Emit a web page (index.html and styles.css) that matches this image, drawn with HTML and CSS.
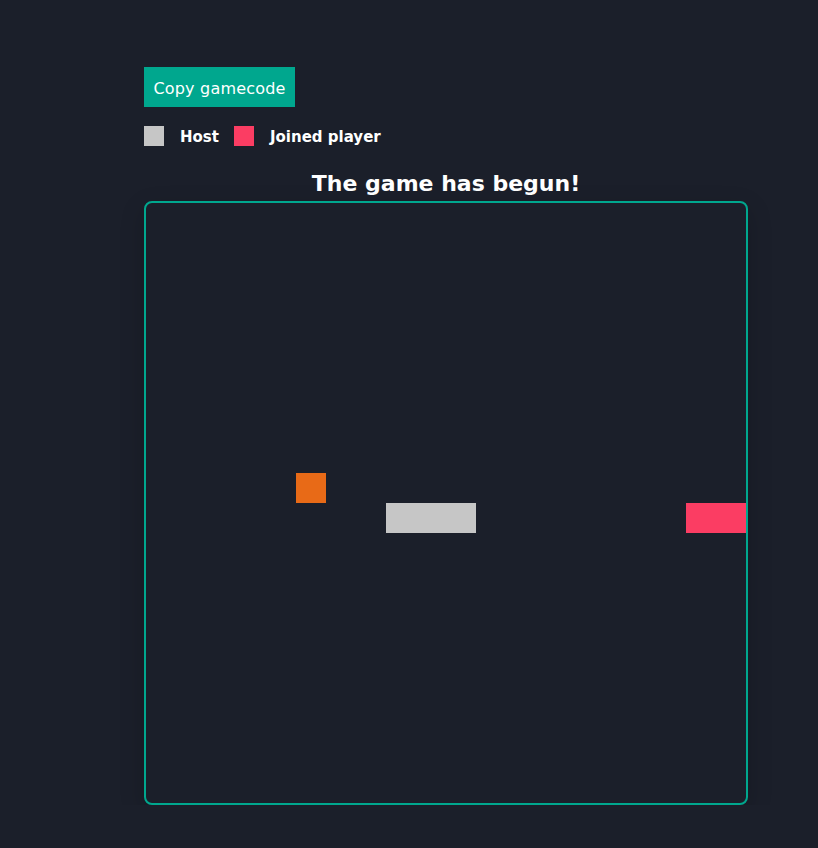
FILE: index.html
```html
<!DOCTYPE html>
<html>
<head>
<meta charset="utf-8">
<link rel="stylesheet" href="styles.css">
</head>
<body>
<main class="page">
  <button class="copy-btn">Copy gamecode</button>
  <div class="legend">
    <span class="swatch host"></span><span class="label">Host</span>
    <span class="swatch joined"></span><span class="label">Joined player</span>
  </div>
  <h1 class="title">The game has begun!</h1>
  <div class="board">
    <div class="cell food" style="left:150px;top:270px;width:30px"></div>
    <div class="cell host-snake" style="left:240px;top:300px;width:90px"></div>
    <div class="cell joined-snake" style="left:540px;top:300px;width:60px"></div>
  </div>
</main>
</body>
</html>
```
FILE: styles.css
```css
html, body {
  margin: 0;
  padding: 0;
  background: #1b1f2a;
  font-family: "DejaVu Sans", "Noto Sans", sans-serif;
  color: #ffffff;
}
.page {
  padding: 67px 0 0 144px;
  width: 604px;
  display: flex;
  flex-direction: column;
  align-items: flex-start;
}
.copy-btn {
  background: #00a78e;
  color: #ffffff;
  border: none;
  font-family: inherit;
  font-size: 16px;
  letter-spacing: 0.2px;
  height: 40px;
  width: 151px;
  padding: 2px 0 0 0;
  cursor: pointer;
}
.legend {
  display: flex;
  align-items: center;
  margin-top: 19px;
  height: 20px;
}
.swatch {
  width: 20px;
  height: 20px;
  display: block;
}
.swatch.host { background: #c6c6c6; }
.swatch.joined { background: #fb3d63; }
.label {
  font-weight: 700;
  font-size: 15px;
  margin-left: 16px;
  margin-right: 15px;
  padding-top: 1px;
}
.title {
  align-self: stretch;
  text-align: center;
  font-size: 22px;
  font-weight: 700;
  margin: 23px 0 0 0;
  line-height: 30px;
}
.board {
  position: relative;
  width: 600px;
  height: 600px;
  border: 2px solid #00a78e;
  border-radius: 8px;
  margin-top: 2px;
  box-shadow: 0 8px 24px rgba(0,0,0,0.18);
}
.cell {
  position: absolute;
  height: 30px;
}
.food { background: #e86a17; }
.host-snake { background: #c6c6c6; }
.joined-snake { background: #fb3d63; }
```
